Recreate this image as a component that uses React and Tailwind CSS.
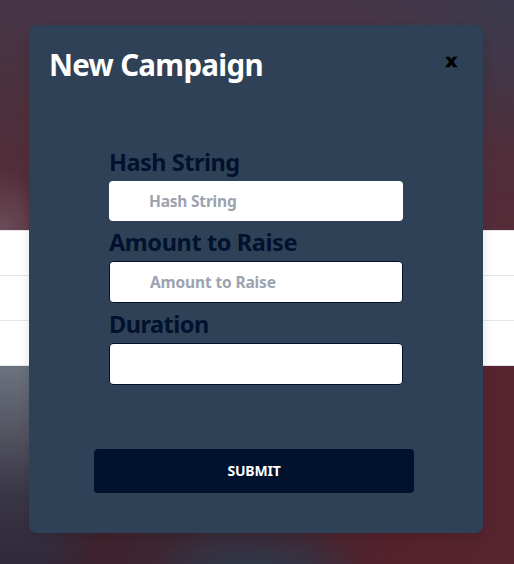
import React from "react";

function Field({ label, placeholder, inputClass, labelClass }) {
  return (
    <label className="block">
      <span className={`block h-9 text-[23.5px] leading-[34px] font-bold whitespace-nowrap text-[#00122e] ${labelClass}`}>
        {label}
      </span>
      <input
        type="text"
        placeholder={placeholder}
        className={`block w-full rounded bg-white pl-10 text-[15.5px] font-bold placeholder:text-[#9ca3af] outline-none ${inputClass}`}
      />
    </label>
  );
}

export default function App() {
  return (
    <div className="relative h-[564px] w-[514px] overflow-hidden bg-[#4b303d] font-['Noto_Sans','Open_Sans',sans-serif]">
      <div className="flex h-full flex-col">
        <div className="h-[230px] bg-[radial-gradient(circle_at_0_100%,#6b4d59_0,#6b4d5900_60px),radial-gradient(circle_at_100%_0,#3b3a4c_0,#3b3a4c00_150px),linear-gradient(#453647,#4d303c_45%,#542c38)]" />
        <div className="h-[136px] border-y border-[#e5e7eb] bg-white">
          <div className="h-[45px] border-b border-[#e5e7eb]" />
          <div className="h-[45px] border-b border-[#e5e7eb]" />
        </div>
        <div className="flex-1 bg-[radial-gradient(ellipse_110px_50px_at_50%_105%,#2b3a4d_0,#2b3a4d00_100%),linear-gradient(90deg,#39253200_8%,#3f222d_20%,#3b2a37_40%,#452631_60%,#54222d_75%,#57252f),linear-gradient(#6c737e,#50505d_38%,#393646_65%,#30293a)]" />
      </div>

      <section className="absolute top-[25px] left-[29px] flex h-[508px] w-[454px] flex-col rounded-lg bg-[#2f4156] shadow-[0_4px_12px_rgba(0,0,0,0.12)]">
        <header className="flex h-[120px] items-start justify-between pt-5 pr-[26px] pl-5">
          <h1 className="text-[29.5px] leading-10 font-bold tracking-[-0.7px] whitespace-nowrap text-white">New Campaign</h1>
          <button className="font-['DejaVu_Sans',sans-serif] text-[18px] leading-8 font-bold text-black [-webkit-text-stroke:0.7px_black]">x</button>
        </header>
        <form className="flex flex-1 flex-col">
          <div className="mr-20 ml-20">
            <Field label="Hash String" placeholder="Hash String" labelClass="tracking-[-0.5px]" inputClass="h-10 tracking-[-0.2px]" />
            <div className="h-1" />
            <Field label="Amount to Raise" placeholder="Amount to Raise" labelClass="tracking-[-0.4px]" inputClass="h-[42px] border border-[#00122e] tracking-[-0.15px]" />
            <div className="h-1" />
            <Field label="Duration" labelClass="tracking-[-0.5px]" inputClass="h-[42px] border border-[#00122e]" />
          </div>
          <button type="button" className="mt-16 ml-[65px] h-11 w-80 rounded bg-[#00122e] text-sm font-bold tracking-[-0.2px] text-white">
            SUBMIT
          </button>
        </form>
      </section>
    </div>
  );
}
